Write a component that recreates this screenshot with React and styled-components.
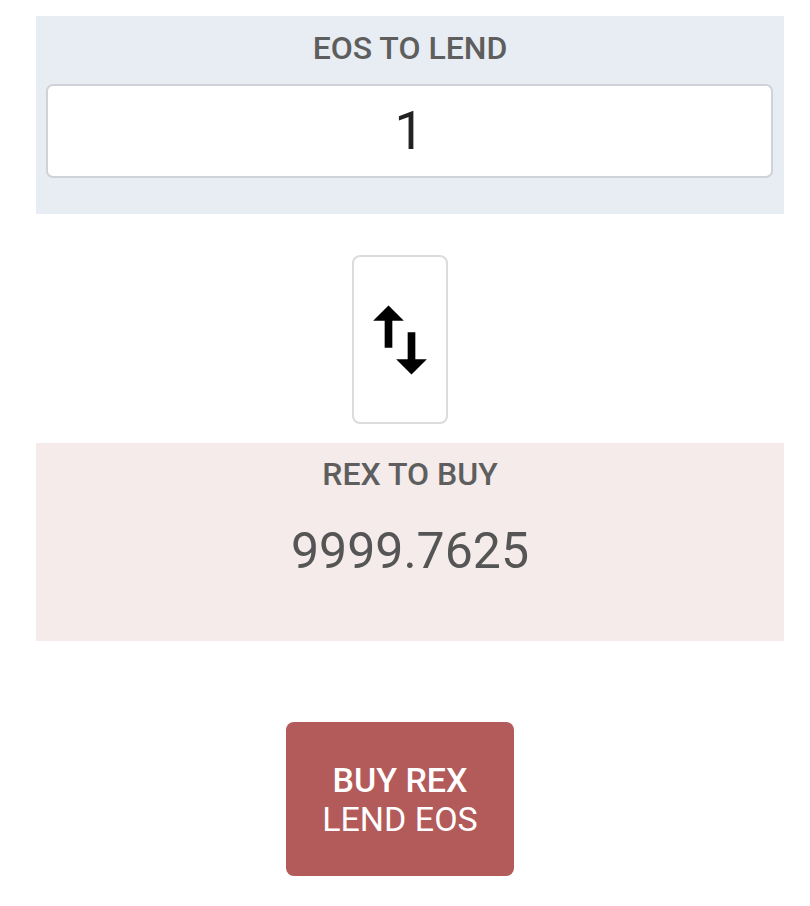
import React from "react";
import styled, { createGlobalStyle } from "styled-components";

const GlobalStyle = createGlobalStyle`
  body {
    margin: 0;
    background: #fff;
    font-family: Roboto, "Liberation Sans", sans-serif;
  }
`;

const Page = styled.div`
  width: 810px;
  padding: 16px 26px 0 36px;
  box-sizing: border-box;
  display: flex;
  flex-direction: column;
  align-items: stretch;
`;

const Panel = styled.section`
  background: ${(p) => p.$bg};
  height: 198px;
  box-sizing: border-box;
  padding: ${(p) => p.$pad};
  display: flex;
  flex-direction: column;
  align-items: center;
`;

const Label = styled.div`
  font-size: 32px;
  font-weight: 500;
  color: #5e5e5e;
  line-height: 1;
`;

const AmountInput = styled.input`
  margin: 20px 11px 0 10px;
  align-self: stretch;
  height: 94px;
  box-sizing: border-box;
  border: 2px solid #cfd2d6;
  border-radius: 7px;
  background: #fff;
  font-family: Roboto, "Liberation Sans", sans-serif;
  font-size: 53px;
  color: #222;
  text-align: center;
  outline: none;
`;

const Value = styled.div`
  margin-top: 36px;
  font-size: 50px;
  color: #555;
  line-height: 1;
`;

const SwapRow = styled.div`
  display: flex;
  justify-content: center;
  padding: 41px 0 19px;
  margin-left: -20px;
`;

const SwapButton = styled.button`
  width: 96px;
  height: 169px;
  padding: 0;
  border: 2px solid #dcdcdc;
  border-radius: 8px;
  background: #fff;
  display: flex;
  align-items: center;
  justify-content: center;
`;

const ActionRow = styled.div`
  display: flex;
  justify-content: center;
  padding-top: 81px;
  margin-left: -20px;
`;

const ActionButton = styled.button`
  width: 228px;
  height: 154px;
  border: none;
  border-radius: 8px;
  background: #b35a5a;
  color: #fff;
  font-family: Roboto, "Liberation Sans", sans-serif;
  display: flex;
  flex-direction: column;
  align-items: center;
  justify-content: center;
  gap: 5px;
`;

const ActionTitle = styled.span`
  font-size: 34px;
  font-weight: 500;
  line-height: 1;
`;

const ActionSub = styled.span`
  font-size: 34px;
  line-height: 1;
`;

function SwapIcon() {
  return (
    <svg width="96" height="96" viewBox="0 0 24 24" fill="#000">
      <path d="M16 17.01V10h-2v7.01h-3L15 21l4-3.99h-3zM9 3L5 6.99h3V14h2V6.99h3L9 3z" />
    </svg>
  );
}

export default function App() {
  return (
    <>
      <GlobalStyle />
      <Page>
        <Panel $bg="#e8edf3" $pad="16px 0 0">
          <Label>EOS TO LEND</Label>
          <AmountInput defaultValue="1" />
        </Panel>
        <SwapRow>
          <SwapButton aria-label="swap">
            <SwapIcon />
          </SwapButton>
        </SwapRow>
        <Panel $bg="#f5ebeb" $pad="15px 0 0">
          <Label>REX TO BUY</Label>
          <Value>9999.7625</Value>
        </Panel>
        <ActionRow>
          <ActionButton>
            <ActionTitle>BUY REX</ActionTitle>
            <ActionSub>LEND EOS</ActionSub>
          </ActionButton>
        </ActionRow>
      </Page>
    </>
  );
}
